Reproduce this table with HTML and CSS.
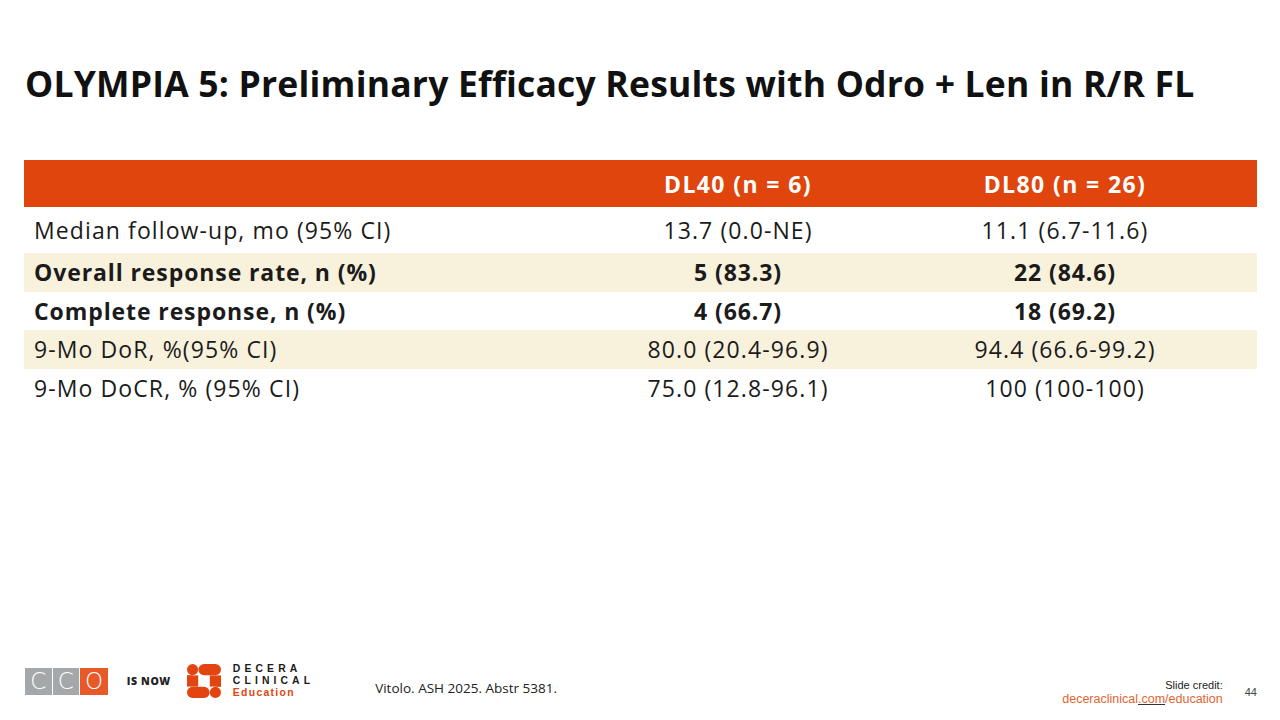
FILE: index.html
```html
<!DOCTYPE html>
<html>
<head>
<meta charset="utf-8">
<link rel="stylesheet" href="styles.css">
</head>
<body>
<div class="slide">
  <h1 class="title">OLYMPIA 5: Preliminary Efficacy Results with Odro + Len in R/R FL</h1>
  <table class="data">
    <thead>
      <tr><th class="c1"></th><th class="c2">DL40 (n = 6)</th><th class="c3">DL80 (n = 26)</th></tr>
    </thead>
    <tbody>
      <tr class="r-white r-first"><td>Median follow-up, mo (95% CI)</td><td>13.7 (0.0-NE)</td><td>11.1 (6.7-11.6)</td></tr>
      <tr class="r-cream bold"><td>Overall response rate, n (%)</td><td>5 (83.3)</td><td>22 (84.6)</td></tr>
      <tr class="r-white bold"><td>Complete response, n (%)</td><td>4 (66.7)</td><td>18 (69.2)</td></tr>
      <tr class="r-cream"><td>9-Mo DoR, %(95% CI)</td><td>80.0 (20.4-96.9)</td><td>94.4 (66.6-99.2)</td></tr>
      <tr class="r-white"><td>9-Mo DoCR, % (95% CI)</td><td>75.0 (12.8-96.1)</td><td>100 (100-100)</td></tr>
    </tbody>
  </table>
  <div class="spacer"></div>
  <footer class="footer">
    <div class="logos">
      <div class="cco">
        <span class="sq grey">C</span><span class="sq grey">C</span><span class="sq orange">O</span>
      </div>
      <span class="isnow">IS NOW</span>
      <svg class="decera-icon" width="34" height="34" viewBox="0 0 34 34">
        <g fill="#E2450F">
          <circle cx="5.6" cy="5.6" r="5.6"/>
          <rect x="11.4" y="0" width="22.6" height="11.2" rx="5.6"/>
          <rect x="0" y="11.4" width="11.2" height="11.2"/>
          <rect x="22.8" y="11.4" width="11.2" height="11.2"/>
          <rect x="0" y="22.8" width="22.6" height="11.2" rx="5.6"/>
          <circle cx="28.4" cy="28.4" r="5.6"/>
          <rect x="0" y="11.4" width="5" height="5"/>
          <rect x="29" y="17.6" width="5" height="5"/>
        </g>
      </svg>
      <div class="decera-text">
        <span>DECERA</span>
        <span>CLINICAL</span>
        <span class="edu">Education</span>
      </div>
    </div>
    <div class="cite">Vitolo. ASH 2025. Abstr 5381.</div>
    <div class="credit">
      <span class="credit-label">Slide credit:</span>
      <span class="credit-link">deceraclinical<u>.com</u>/education</span>
    </div>
    <div class="pagenum">44</div>
  </footer>
</div>
</body>
</html>
```

FILE: styles.css
```css
* { box-sizing: border-box; }
html, body { margin: 0; padding: 0; background: #fff; }
.slide {
  width: 1280px;
  height: 720px;
  display: flex;
  flex-direction: column;
  padding: 0 23px 0 24px;
  font-family: "Open Sans", "Noto Sans", sans-serif;
  color: #1b1b1b;
}
.title {
  margin: 60px 0 0 1px;
  font-family: "Open Sans", sans-serif;
  font-weight: 700;
  font-size: 35.5px;
  line-height: 46px;
  letter-spacing: 0.2px;
  color: #111;
  white-space: nowrap;
}
.data {
  margin-top: 54px;
  width: 1233px;
  border-collapse: collapse;
  font-size: 23px;
  letter-spacing: 1.1px;
}
.data th {
  background: #DF450C;
  color: #fff;
  height: 47px;
  font-weight: 700;
  font-size: 23px;
  letter-spacing: 1.4px;
  padding: 0;
  text-align: center;
}
.data .c1 { width: 579px; }
.data .c2 { width: 270px; }
.data .c3 { width: 384px; }
.data td {
  padding: 0;
  text-align: center;
  height: 38.5px;
  white-space: nowrap;
}
.data td:first-child { text-align: left; padding-left: 10px; }
.data .r-first td { height: 46px; }
.r-cream td { background: #F8F1DC; }
.r-white td { background: #fff; }
.bold td { font-weight: 700; letter-spacing: 0.9px; }
.spacer { flex: 1; }
.footer {
  height: 66px;
  display: flex;
  align-items: flex-start;
}
.logos { display: flex; align-items: center; height: 40px; margin-top: 7px; }
.cco { display: flex; margin-left: 1px; }
.sq {
  width: 27.6px; height: 27px;
  display: flex; align-items: center; justify-content: center;
  color: #fff; font-family: "DejaVu Sans", sans-serif; font-size: 23px; font-weight: 300;
  border-right: 1px solid #fff;
}
.sq:last-child { border-right: none; }
.grey { background: #A5A8AB; }
.orange { background: #E8592A; }
.isnow {
  margin-left: 19px;
  font-size: 10.5px; font-weight: 800; color: #222;
  letter-spacing: 0.6px;
  font-family: "Open Sans", sans-serif;
}
.decera-icon { margin-left: 16px; }
.decera-text {
  margin-left: 12px;
  display: flex; flex-direction: column;
  font-family: "Liberation Sans", sans-serif;
  font-size: 10.4px; line-height: 12px;
  font-weight: 700; letter-spacing: 4.1px; color: #1a1a1a;
}
.decera-text .edu { color: #E2450F; letter-spacing: 1.3px; font-weight: 700; }
.cite {
  margin-left: 61px;
  margin-top: 25px;
  font-size: 13.5px;
  line-height: 18px;
  color: #222;
}
.credit {
  margin-left: auto;
  display: flex; flex-direction: column; align-items: flex-end;
  margin-top: 24px;
  font-family: "Liberation Sans", sans-serif;
  font-size: 11px; line-height: 14px;
}
.credit-label { color: #222; }
.credit-link { color: #E2652F; font-size: 12.5px; }
.credit-link u { text-decoration-color: #333; }
.pagenum {
  margin-left: 22px; margin-top: 31px;
  font-family: "Liberation Sans", sans-serif;
  font-size: 11px; line-height: 14px; color: #444;
}
```
